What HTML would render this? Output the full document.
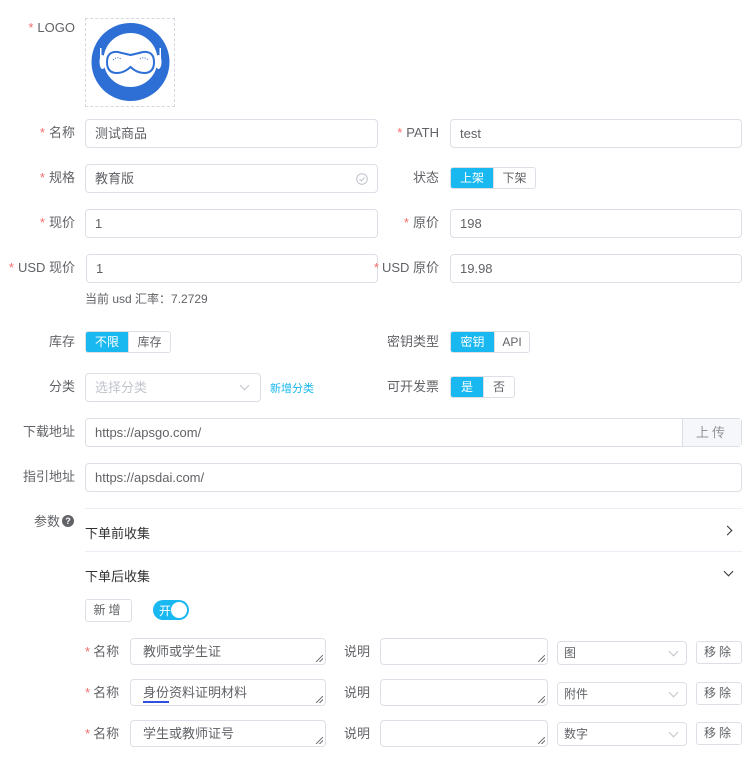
<!DOCTYPE html>
<html><head><meta charset="utf-8"><style>
*{box-sizing:border-box;margin:0;padding:0}
body{width:754px;height:779px;background:#fff;font-family:"Liberation Sans","Noto Sans CJK SC",sans-serif;font-size:13px;color:#606266;position:relative;overflow:hidden}
.a{position:absolute}
.lbl{position:absolute;text-align:right;line-height:16px;white-space:nowrap}
.req{color:#f56c6c;margin-right:4px}
.inp{position:absolute;border:1px solid #dcdfe6;border-radius:4px;height:29px;line-height:27px;padding-left:9px;color:#606266;background:#fff}
.bg{position:absolute;display:flex;height:22px;border:1px solid #dcdfe6;border-radius:3px;overflow:hidden;font-size:12px}
.bg span{display:block;text-align:center;line-height:20px;color:#606266}
.bg span.on{background:#1ab8f0;color:#fff}
.bg span+span{border-left:1px solid #dcdfe6}
.line{position:absolute;left:85px;width:657px;height:1px;background:#ebeef5}
.ttl{position:absolute;left:85px;color:#303133;font-size:13px}
.ta{position:absolute;border:1px solid #dcdfe6;border-radius:4px;height:27px;line-height:25px;padding-left:12px;color:#606266}
.ta:after{content:"";position:absolute;right:2px;bottom:2px;width:7px;height:7px;background:linear-gradient(135deg,transparent 45%,#777 45%,#777 55%,transparent 55%,transparent 70%,#777 70%,#777 80%,transparent 80%)}
.sel{position:absolute;border:1px solid #dcdfe6;border-radius:4px;height:24px;line-height:22px;padding-left:6px;font-size:12px;color:#606266}
.chev{position:absolute;right:9px;top:6px;width:7px;height:7px;border-right:1px solid #c0c4cc;border-bottom:1px solid #c0c4cc;transform:rotate(45deg)}
.btn{position:absolute;border:1px solid #dcdfe6;border-radius:3px;height:23px;line-height:21px;text-align:center;font-size:12px;color:#606266;letter-spacing:3px}
</style></head><body>

<div class="lbl" style="left:20px;top:20px;width:55px"><span class="req">*</span>LOGO</div>
<div class="a" style="left:85px;top:18px;width:90px;height:89px;border:1px dashed #d4d7de"></div>
<svg class="a" style="left:85px;top:18px" width="90" height="89" viewBox="0 0 90 89">
<circle cx="45.5" cy="44" r="39" fill="#2e6fd6"/>
<circle cx="45.5" cy="42" r="27" fill="#fff"/>
<ellipse cx="17.5" cy="44" rx="3" ry="7" fill="#fff"/><ellipse cx="73.5" cy="44" rx="3" ry="7" fill="#fff"/>
<rect x="15" y="30" width="1.5" height="18" fill="#fff"/><rect x="74.5" y="30" width="1.5" height="18" fill="#fff"/>
<path d="M22 44 Q22 33 33 34 Q41 36 45.5 37 Q50 36 58 34 Q69 33 69 44 Q69 55 59 55 Q52 55 45.5 49 Q39 55 32 55 Q22 55 22 44 Z" fill="none" stroke="#2e6fd6" stroke-width="2"/>
<path d="M28 42 Q32 38 36 41" fill="none" stroke="#2e6fd6" stroke-width="1" stroke-dasharray="1 1.5"/>
<path d="M55 41 Q59 38 63 42" fill="none" stroke="#2e6fd6" stroke-width="1" stroke-dasharray="1 1.5"/>
</svg>

<div class="lbl" style="left:10px;top:125px;width:65px"><span class="req">*</span>名称</div>
<div class="inp" style="left:85px;top:119px;width:293px">测试商品</div>
<div class="lbl" style="left:370px;top:125px;width:69px"><span class="req">*</span>PATH</div>
<div class="inp" style="left:450px;top:119px;width:292px">test</div>

<div class="lbl" style="left:10px;top:170px;width:65px"><span class="req">*</span>规格</div>
<div class="inp" style="left:85px;top:164px;width:293px">教育版<svg class="a" style="right:9px;top:8px" width="12" height="12" viewBox="0 0 12 12"><circle cx="6" cy="6" r="5.3" fill="none" stroke="#c0c4cc"/><path d="M3.5 6.2 L5.3 8 L8.6 4.5" fill="none" stroke="#c0c4cc"/></svg></div>
<div class="lbl" style="left:370px;top:170px;width:69px">状态</div>
<div class="bg" style="left:450px;top:167px"><span class="on" style="width:42px">上架</span><span style="width:42px">下架</span></div>

<div class="lbl" style="left:10px;top:215px;width:65px"><span class="req">*</span>现价</div>
<div class="inp" style="left:85px;top:209px;width:293px">1</div>
<div class="lbl" style="left:370px;top:215px;width:69px"><span class="req">*</span>原价</div>
<div class="inp" style="left:450px;top:209px;width:292px">198</div>

<div class="lbl" style="left:0px;top:260px;width:75px"><span class="req">*</span>USD 现价</div>
<div class="inp" style="left:86px;top:254px;width:292px">1</div>
<div class="lbl" style="left:370px;top:260px;width:69px"><span class="req" style="margin-right:3px">*</span>USD 原价</div>
<div class="inp" style="left:450px;top:254px;width:292px">19.98</div>
<div class="a" style="left:85px;top:290px;font-size:12px">当前 usd 汇率：7.2729</div>

<div class="lbl" style="left:10px;top:334px;width:65px">库存</div>
<div class="bg" style="left:85px;top:331px"><span class="on" style="width:42px">不限</span><span style="width:42px">库存</span></div>
<div class="lbl" style="left:370px;top:334px;width:69px">密钥类型</div>
<div class="bg" style="left:450px;top:331px"><span class="on" style="width:43px">密钥</span><span style="width:35px">API</span></div>

<div class="lbl" style="left:10px;top:379px;width:65px">分类</div>
<div class="inp" style="left:85px;top:373px;width:176px;color:#c0c4cc">选择分类<div class="chev" style="right:12px;top:8px"></div></div>
<div class="a" style="left:270px;top:380px;font-size:11px;color:#1ab8f0">新增分类</div>
<div class="lbl" style="left:370px;top:379px;width:69px">可开发票</div>
<div class="bg" style="left:450px;top:376px"><span class="on" style="width:32px">是</span><span style="width:31px">否</span></div>

<div class="lbl" style="left:10px;top:424px;width:65px">下载地址</div>
<div class="inp" style="left:85px;top:418px;width:657px">https://apsgo.com/<div class="a" style="right:0;top:0;width:59px;height:27px;background:#f5f7fa;border-left:1px solid #dcdfe6;text-align:center;color:#909399;letter-spacing:3px">上传</div></div>

<div class="lbl" style="left:10px;top:469px;width:65px">指引地址</div>
<div class="inp" style="left:85px;top:463px;width:657px">https://apsdai.com/</div>

<div class="lbl" style="left:10px;top:514px;width:50px">参数</div>
<div class="a" style="left:62px;top:515px;width:12px;height:12px;border-radius:50%;background:#606266;color:#fff;font-size:9px;line-height:12px;text-align:center;font-weight:bold">?</div>
<div class="line" style="top:508px"></div>
<div class="ttl" style="top:523px">下单前收集</div>
<div class="a" style="left:724px;top:527px;width:7px;height:7px;border-right:1px solid #303133;border-top:1px solid #303133;transform:rotate(45deg)"></div>
<div class="line" style="top:551px"></div>
<div class="ttl" style="top:566px">下单后收集</div>
<div class="a" style="left:725px;top:568px;width:7px;height:7px;border-right:1px solid #303133;border-bottom:1px solid #303133;transform:rotate(45deg)"></div>

<div class="btn" style="left:85px;top:599px;width:47px">新增</div>
<div class="a" style="left:153px;top:600px;width:36px;height:20px;border-radius:10px;background:#1ab8f0"><span class="a" style="left:6px;top:2px;color:#fff;font-size:12px">开</span><div class="a" style="right:2px;top:2px;width:16px;height:16px;border-radius:50%;background:#fff"></div></div>

<div class="lbl" style="left:85px;top:644px"><span class="req" style="margin-right:3px">*</span>名称</div>
<div class="ta" style="left:130px;top:638px;width:196px">教师或学生证</div>
<div class="lbl" style="left:344px;top:644px">说明</div>
<div class="ta" style="left:380px;top:638px;width:168px"></div>
<div class="sel" style="left:557px;top:641px;width:130px">图<div class="chev"></div></div>
<div class="btn" style="left:696px;top:641px;width:46px">移除</div>

<div class="lbl" style="left:85px;top:685px"><span class="req" style="margin-right:3px">*</span>名称</div>
<div class="ta" style="left:130px;top:679px;width:196px"><span style="border-bottom:2px solid #3050e0;line-height:17px;display:inline-block">身份</span>资料证明材料</div>
<div class="lbl" style="left:344px;top:685px">说明</div>
<div class="ta" style="left:380px;top:679px;width:168px"></div>
<div class="sel" style="left:557px;top:682px;width:130px">附件<div class="chev"></div></div>
<div class="btn" style="left:696px;top:682px;width:46px">移除</div>

<div class="lbl" style="left:85px;top:726px"><span class="req" style="margin-right:3px">*</span>名称</div>
<div class="ta" style="left:130px;top:720px;width:196px">学生或教师证号</div>
<div class="lbl" style="left:344px;top:726px">说明</div>
<div class="ta" style="left:380px;top:720px;width:168px"></div>
<div class="sel" style="left:557px;top:722px;width:130px">数字<div class="chev"></div></div>
<div class="btn" style="left:696px;top:722px;width:46px">移除</div>
</body></html>
